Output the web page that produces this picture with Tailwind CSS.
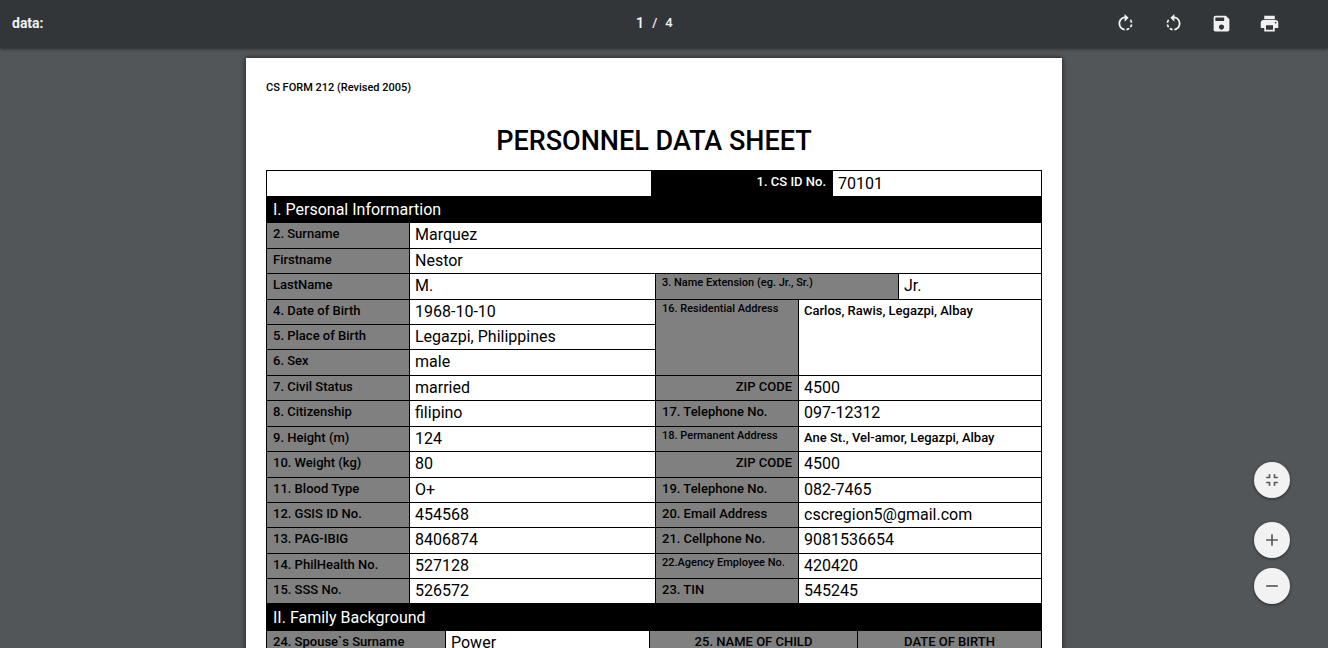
<!DOCTYPE html>
<html lang="en">
<head>
<meta charset="utf-8">
<meta name="viewport" content="width=device-width, initial-scale=1">
<title>data:</title>
<script src="https://cdn.jsdelivr.net/npm/@tailwindcss/browser@4"></script>
</head>
<body class="flex h-screen flex-col overflow-hidden bg-[#525659] font-[Roboto,sans-serif] text-black">
<header class="relative z-10 grid h-12 shrink-0 grid-cols-3 items-center bg-[#323639] pr-[41px] pb-0.5 pl-3 text-[#f1f1f1] shadow-[0_1px_3px_rgba(0,0,0,0.5)]">
  <h1 class="text-[14px] font-bold">data:</h1>
  <div class="flex items-center justify-center gap-2 pl-2 text-[13px] font-medium">
    <input type="text" aria-label="Page" value="1" class="w-2.5 bg-transparent text-right text-[15px] font-medium outline-none">
    <span>/</span><span>4</span>
  </div>
  <div class="flex items-center justify-end gap-3">
    <button type="button" aria-label="Rotate clockwise" class="flex size-9 items-center justify-center"><svg class="size-[21px]" viewBox="0 0 24 24" fill="currentColor"><path d="M15.55 5.55L11 1v3.07C7.06 4.56 4 7.92 4 12s3.05 7.44 7 7.93v-2.02c-2.84-.48-5-2.94-5-5.91s2.16-5.43 5-5.91V10l4.55-4.45zM19.93 11c-.17-1.39-.72-2.73-1.62-3.89l-1.42 1.42c.54.75.88 1.6 1.02 2.47h2.02zM13 17.9v2.02c1.39-.17 2.74-.71 3.9-1.61l-1.44-1.44c-.75.54-1.59.89-2.46 1.03zm3.89-2.42l1.42 1.41c.9-1.16 1.45-2.5 1.62-3.89h-2.02c-.14.87-.48 1.72-1.02 2.48z"/></svg></button>
    <button type="button" aria-label="Rotate counterclockwise" class="flex size-9 items-center justify-center"><svg class="size-[21px]" viewBox="0 0 24 24" fill="currentColor"><path d="M7.11 8.53L5.7 7.11C4.8 8.27 4.24 9.61 4.07 11h2.02c.14-.87.49-1.72 1.02-2.47zM6.09 13H4.07c.17 1.39.72 2.73 1.62 3.89l1.41-1.42c-.52-.75-.87-1.59-1.01-2.47zm1.01 5.32c1.16.9 2.51 1.44 3.9 1.61V17.9c-.87-.15-1.71-.49-2.46-1.03L7.1 18.32zM13 4.07V1L8.45 5.55 13 10V6.09c2.84.48 5 2.94 5 5.91s-2.16 5.43-5 5.91v2.02c3.95-.49 7-3.85 7-7.93s-3.05-7.44-7-7.93z"/></svg></button>
    <button type="button" aria-label="Save" class="flex size-9 items-center justify-center"><svg class="size-[21px]" viewBox="0 0 24 24" fill="currentColor"><path d="M17 3H5c-1.11 0-2 .9-2 2v14c0 1.1.89 2 2 2h14c1.1 0 2-.9 2-2V7l-4-4zm-5 16c-1.66 0-3-1.34-3-3s1.34-3 3-3 3 1.34 3 3-1.34 3-3 3zm3-10H5V5h10v4z"/></svg></button>
    <button type="button" aria-label="Print" class="flex size-9 items-center justify-center"><svg class="size-[21px]" viewBox="0 0 24 24" fill="currentColor"><path d="M19 8H5c-1.66 0-3 1.34-3 3v6h4v4h12v-4h4v-6c0-1.66-1.34-3-3-3zm-3 11H8v-5h8v5zm3-7c-.55 0-1-.45-1-1s.45-1 1-1 1 .45 1 1-.45 1-1 1zm-1-9H6v4h12V3z"/></svg></button>
  </div>
</header>

<main class="min-h-0 grow overflow-y-auto pt-2.5 pr-5 [scrollbar-width:none]">
  <article class="mx-auto max-w-[816px] bg-white px-5 pt-[21px] pb-5 shadow-[0_0_5px_rgba(0,0,0,0.7)]">
    <p class="text-[11px] leading-[18px] font-medium">CS FORM 212 (Revised 2005)</p>
    <h2 class="pt-7 pb-[13px] text-center text-[27px] leading-8 font-medium">PERSONNEL DATA SHEET</h2>

    <table class="w-full table-fixed border-collapse text-left text-base leading-6 [&_td]:border [&_td]:border-black [&_td]:px-[5px] [&_td]:py-0 [&_td]:align-top [&_th]:border [&_th]:border-black [&_th]:px-[6px] [&_th]:py-0 [&_th]:align-top">
      <colgroup><col class="w-[143px]"><col class="w-[242px]"><col class="w-[4px]"><col class="w-[143px]"><col class="w-[34px]"><col class="w-[66px]"><col></colgroup>
      <tbody class="[&_th]:font-medium">
        <tr class="h-[26px]"><td colspan="2"></td><th scope="row" colspan="3" class="bg-black text-right text-[13px] leading-[22px] text-white">1. CS ID No.</th><td colspan="2" class="pt-px!">70101</td></tr>
        <tr class="h-[26px] bg-black text-white"><th colspan="7" class="leading-[25px] font-normal!">I. Personal Informartion</th></tr>
        <tr class="h-[26px]"><th scope="row" class="bg-[#808080] text-[13px] leading-[22px]">2. Surname</th><td colspan="6">Marquez</td></tr>
        <tr class="h-[25px]"><th scope="row" class="bg-[#808080] text-[13px] leading-[22px]">Firstname</th><td colspan="6">Nestor</td></tr>
        <tr class="h-[26px]"><th scope="row" class="bg-[#808080] text-[13px] leading-[22px]">LastName</th><td colspan="2">M.</td><th scope="row" colspan="3" class="bg-[#808080] text-[11px] leading-[18px]">3. Name Extension (eg. Jr., Sr.)</th><td>Jr.</td></tr>
        <tr class="h-[25px]"><th scope="row" class="bg-[#808080] text-[13px] leading-[22px]">4. Date of Birth</th><td colspan="2">1968-10-10</td><th scope="row" rowspan="3" class="bg-[#808080] text-[11px] leading-[18px]">16. Residential Address</th><td colspan="3" rowspan="3" class="text-[13px] leading-[22px] font-medium">Carlos, Rawis, Legazpi, Albay</td></tr>
        <tr class="h-[25px]"><th scope="row" class="bg-[#808080] text-[13px] leading-[22px]">5. Place of Birth</th><td colspan="2">Legazpi, Philippines</td></tr>
        <tr class="h-[26px]"><th scope="row" class="bg-[#808080] text-[13px] leading-[22px]">6. Sex</th><td colspan="2">male</td></tr>
        <tr class="h-[25px]"><th scope="row" class="bg-[#808080] text-[13px] leading-[22px]">7. Civil Status</th><td colspan="2">married</td><th scope="row" class="bg-[#808080] text-right text-[13px] leading-[22px]">ZIP CODE</th><td colspan="3">4500</td></tr>
        <tr class="h-[26px]"><th scope="row" class="bg-[#808080] text-[13px] leading-[22px]">8. Citizenship</th><td colspan="2">filipino</td><th scope="row" class="bg-[#808080] text-[13px] leading-[22px]">17. Telephone No.</th><td colspan="3">097-12312</td></tr>
        <tr class="h-[25px]"><th scope="row" class="bg-[#808080] text-[13px] leading-[22px]">9. Height (m)</th><td colspan="2">124</td><th scope="row" class="bg-[#808080] text-[11px] leading-[18px]">18. Permanent Address</th><td colspan="3" class="text-[13px] leading-[22px] font-medium">Ane St., Vel-amor, Legazpi, Albay</td></tr>
        <tr class="h-[26px]"><th scope="row" class="bg-[#808080] text-[13px] leading-[22px]">10. Weight (kg)</th><td colspan="2">80</td><th scope="row" class="bg-[#808080] text-right text-[13px] leading-[22px]">ZIP CODE</th><td colspan="3">4500</td></tr>
        <tr class="h-[25px]"><th scope="row" class="bg-[#808080] text-[13px] leading-[22px]">11. Blood Type</th><td colspan="2">O+</td><th scope="row" class="bg-[#808080] text-[13px] leading-[22px]">19. Telephone No.</th><td colspan="3">082-7465</td></tr>
        <tr class="h-[25px]"><th scope="row" class="bg-[#808080] text-[13px] leading-[22px]">12. GSIS ID No.</th><td colspan="2">454568</td><th scope="row" class="bg-[#808080] text-[13px] leading-[22px]">20. Email Address</th><td colspan="3">cscregion5@gmail.com</td></tr>
        <tr class="h-[26px]"><th scope="row" class="bg-[#808080] text-[13px] leading-[22px]">13. PAG-IBIG</th><td colspan="2">8406874</td><th scope="row" class="bg-[#808080] text-[13px] leading-[22px]">21. Cellphone No.</th><td colspan="3">9081536654</td></tr>
        <tr class="h-[25px]"><th scope="row" class="bg-[#808080] text-[13px] leading-[22px]">14. PhilHealth No.</th><td colspan="2">527128</td><th scope="row" class="bg-[#808080] text-[11px] leading-[18px]">22.Agency Employee No.</th><td colspan="3">420420</td></tr>
        <tr class="h-[25px]"><th scope="row" class="bg-[#808080] text-[13px] leading-[22px]">15. SSS No.</th><td colspan="2">526572</td><th scope="row" class="bg-[#808080] text-[13px] leading-[22px]">23. TIN</th><td colspan="3">545245</td></tr>
      </tbody>
    </table>
    <table class="w-full table-fixed border-collapse text-left text-base leading-6 [&_td]:border [&_td]:border-black [&_td]:px-[5px] [&_td]:py-0 [&_td]:align-top [&_th]:border [&_th]:border-black [&_th]:px-[6px] [&_th]:py-0 [&_th]:align-top">
      <colgroup><col class="w-[179px]"><col class="w-[204px]"><col class="w-[208px]"><col></colgroup>
      <tbody class="[&_th]:font-medium">
        <tr class="h-[26px] bg-black text-white"><th colspan="4" class="leading-[25px] font-normal!">II. Family Background</th></tr>
        <tr class="h-[26px]"><th scope="row" class="bg-[#808080] text-[13px] leading-[22px]">24. Spouse`s Surname</th><td>Power</td><th scope="col" class="bg-[#808080] text-center text-[13px] leading-[22px]">25. NAME OF CHILD</th><th scope="col" class="bg-[#808080] text-center text-[13px] leading-[22px]">DATE OF BIRTH</th></tr>
      </tbody>
    </table>
  </article>
</main>

<div class="fixed right-[38px] bottom-11 z-20 flex flex-col gap-2.5 text-[#5a5a5a]">
  <button type="button" aria-label="Fit to page" class="mb-3.5 flex size-9 items-center justify-center rounded-full bg-[#f2f2f2] shadow-[0_1px_3px_rgba(0,0,0,0.5)]"><svg class="size-5" viewBox="0 0 24 24" fill="currentColor"><path d="M5 16h3v3h2v-5H5v2zm3-8H5v2h5V5H8v3zm6 11h2v-3h3v-2h-5v5zm2-11V5h-2v5h5V8h-3z"/></svg></button>
  <button type="button" aria-label="Zoom in" class="flex size-9 items-center justify-center rounded-full bg-[#f2f2f2] shadow-[0_1px_3px_rgba(0,0,0,0.5)]"><svg class="size-5" viewBox="0 0 24 24" fill="currentColor"><path d="M19 13h-6v6h-2v-6H5v-2h6V5h2v6h6v2z"/></svg></button>
  <button type="button" aria-label="Zoom out" class="flex size-9 items-center justify-center rounded-full bg-[#f2f2f2] shadow-[0_1px_3px_rgba(0,0,0,0.5)]"><svg class="size-5" viewBox="0 0 24 24" fill="currentColor"><path d="M19 13H5v-2h14v2z"/></svg></button>
</div>
</body>
</html>
